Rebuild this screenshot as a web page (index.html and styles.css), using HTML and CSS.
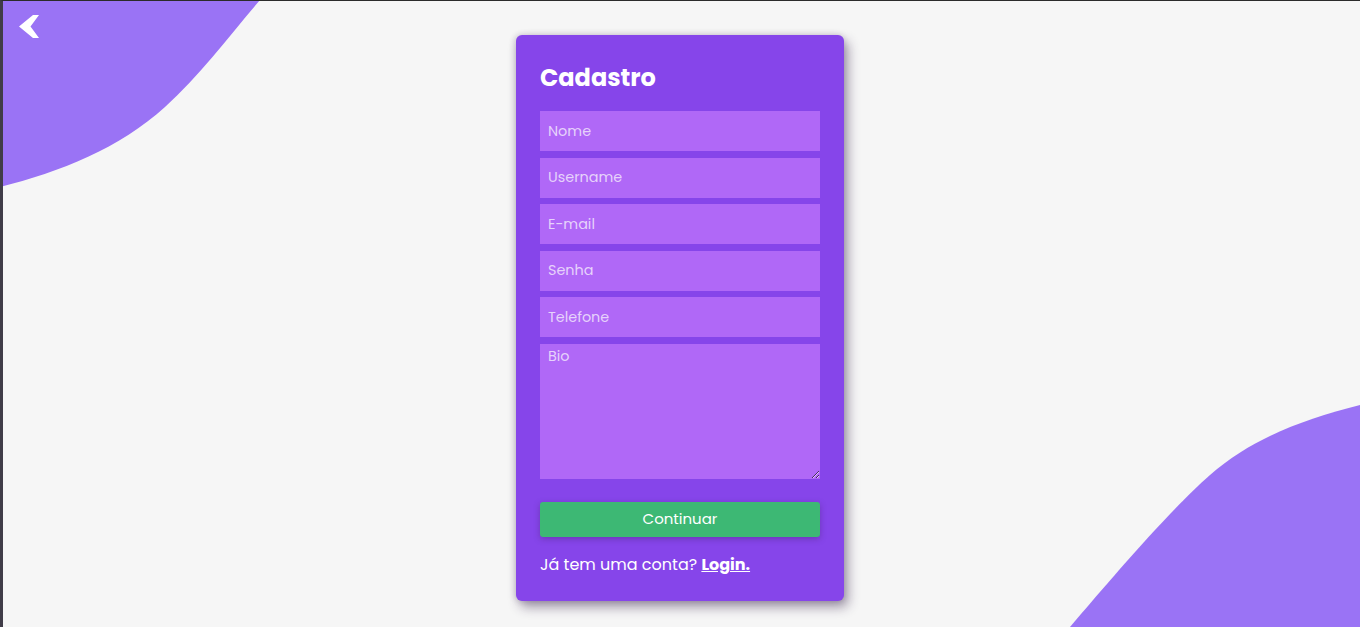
FILE: index.html
```html
<!DOCTYPE html>
<html lang="pt-BR">
<head>
<meta charset="utf-8">
<title>Cadastro</title>
<link rel="stylesheet" href="styles.css">
</head>
<body>
<svg class="blob blob-top" width="270" height="200" viewBox="0 0 270 200" aria-hidden="true">
  <path d="M0 0 H260 C230 35 200 75 165 107 C120 148 60 172 0 187 Z" fill="#9a73f5"/>
</svg>
<svg class="blob blob-bottom" width="300" height="230" viewBox="1060 400 300 230" aria-hidden="true">
  <path d="M1360 405 C1300 420 1250 440 1210 475 C1170 510 1110 580 1070 627 L1360 627 Z" fill="#9a73f5"/>
</svg>
<a class="back" href="#" aria-label="Voltar">
  <svg width="28" height="28" viewBox="0 0 28 28"><path d="M19 2 H25 L16.5 13.5 L25 25 H19 L5 13.5 Z" fill="#fff"/></svg>
</a>
<main class="page">
  <form class="card">
    <h1 class="title">Cadastro</h1>
    <div class="fields">
      <input class="field" type="text" placeholder="Nome">
      <input class="field" type="text" placeholder="Username">
      <input class="field" type="email" placeholder="E-mail">
      <input class="field" type="password" placeholder="Senha">
      <input class="field" type="tel" placeholder="Telefone">
      <textarea class="field area" placeholder="Bio"></textarea>
    </div>
    <button class="submit" type="button">Continuar</button>
    <p class="foot">Já tem uma conta? <a href="#" class="login">Login.</a></p>
  </form>
</main>
<div class="frame"></div>
</body>
</html>
```

FILE: styles.css
```css
html, body {
  margin: 0;
  padding: 0;
}
body {
  min-height: 100vh;
  background: #f6f6f6;
  font-family: "Poppins", "DejaVu Sans", sans-serif;
  overflow: hidden;
}
.frame {
  position: fixed;
  inset: 0;
  pointer-events: none;
  border-left: 3px solid #403c48;
  border-top: 1px solid #2b2b2b;
}
.blob {
  position: absolute;
}
.blob-top {
  left: 0;
  top: 0;
}
.blob-bottom {
  left: 1060px;
  top: 400px;
}
.back {
  position: absolute;
  left: 14px;
  top: 13px;
  display: block;
  line-height: 0;
}
.page {
  position: relative;
  display: flex;
  justify-content: center;
  padding-top: 35px;
}
.card {
  width: 280px;
  padding: 24px 24px 24px;
  background: #8645ea;
  border-radius: 6px;
  box-shadow: 4px 6px 12px rgba(50, 30, 70, 0.45), -1px 0 6px rgba(50, 30, 70, 0.2);
  display: flex;
  flex-direction: column;
}
.title {
  margin: 1px 0 15px;
  color: #fff;
  font-size: 24px;
  font-weight: 700;
  line-height: 36px;
}
.fields {
  display: flex;
  flex-direction: column;
  gap: 6.6px;
}
.field {
  box-sizing: border-box;
  width: 280px;
  height: 40px;
  margin: 0;
  padding: 0 8px;
  border: none;
  outline: none;
  background: #b068f7;
  color: #fff;
  font-family: inherit;
  font-size: 14.4px;
}
.field::placeholder {
  color: #e6d2fb;
}
.area {
  height: 135px;
  padding-top: 2px;
  resize: vertical;
  display: block;
}
.submit {
  margin-top: 23px;
  height: 35px;
  padding: 0 0 2px;
  border: none;
  border-radius: 3px;
  background: #3db874;
  color: #fff;
  font-family: inherit;
  font-size: 15px;
  box-shadow: 0 2px 6px rgba(60, 30, 90, 0.35);
}
.foot {
  margin: 16px 0 0;
  color: #fff;
  font-size: 16px;
  line-height: 24px;
}
.login {
  color: #fff;
  font-weight: 700;
}
```
